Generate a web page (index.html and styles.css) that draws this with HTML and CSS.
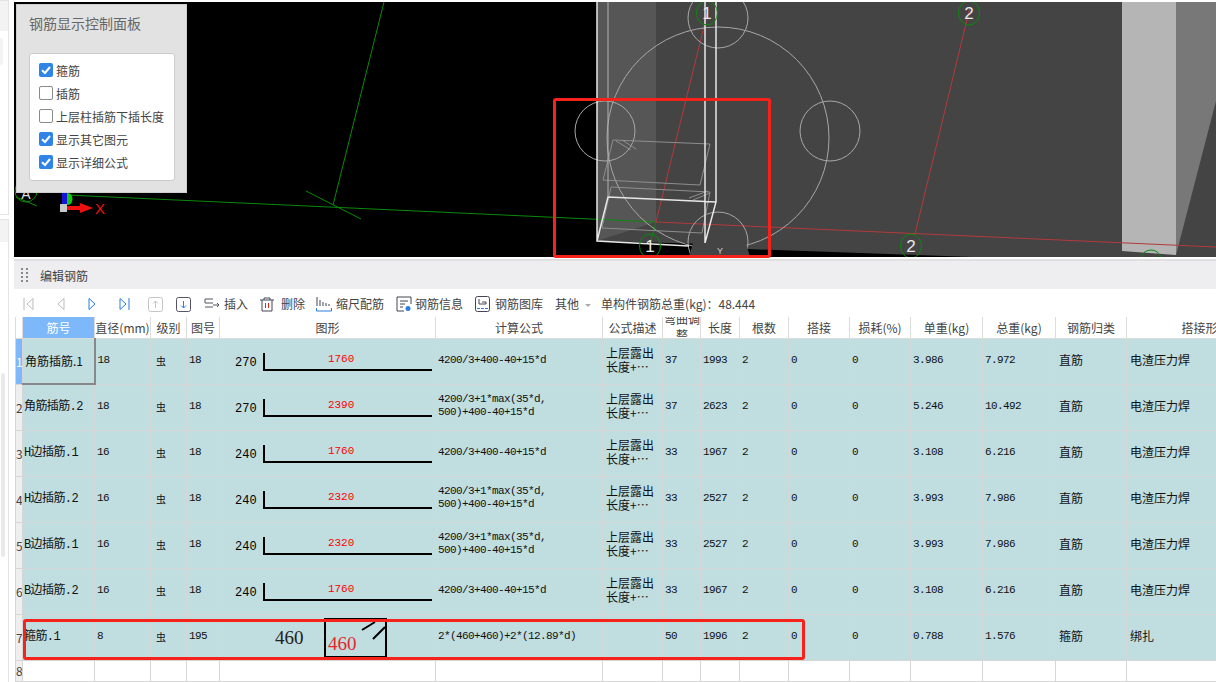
FILE: index.html
```html
<!DOCTYPE html>
<html lang="zh">
<head>
<meta charset="utf-8">
<title>编辑钢筋</title>
<link rel="stylesheet" href="styles.css">
</head>
<body>
<div class="app">
  <aside class="side">
    <div class="side-card"><div class="side-head"></div><div class="side-body"></div></div>
    <div class="side-card side-low"><div class="side-head"></div><div class="side-track"></div></div>
  </aside>
  <main class="main">
    <section class="view">
      <svg class="scene" viewBox="14 2 1202 255" width="1202" height="255">
        <rect x="14" y="2" width="1202" height="255" fill="#000"/>
        <polygon points="597,2 1216,2 1216,257 973,257 746,249 705,244 597,241" fill="#444"/>
        <polygon points="597,2 656,2 656,222 597,241" fill="#565656"/>
        <polygon points="1122,2 1176,2 1176,255 1122,251" fill="#b5b5b5"/>
        <polygon points="1176,2 1216,2 1216,101 1176,255" fill="#787878"/>
        <path d="M67 195L656 222M384 2L333 205M306 191L361 219M656 222L650 244" stroke="#0a8a0a" fill="none"/>
        <path d="M708 10L656 222M970 7L915 234M656 222L1216 247" stroke="#b33a3a" fill="none"/>
        <g fill="none" stroke="#a8a8a8">
          <circle cx="718" cy="138" r="111"/>
          <circle cx="718" cy="18" r="30"/>
          <circle cx="605" cy="131" r="30"/>
          <circle cx="830" cy="131" r="30"/>
          <circle cx="718" cy="242" r="30"/>
        </g>
        <g fill="none" stroke="#8e8e8e">
          <path d="M613 140L710 144L700 185L603 180Z"/>
          <path d="M611 187L710 192L702 233L602 228Z"/>
          <path d="M616 141L631 150M622 140L636 149M689 198L708 191M693 200L710 193"/>
        </g>
        <g fill="none" stroke="#e8e8e8">
          <path d="M597 2V241L689 246M705 2V243M716 2V202L705 243M597 241L608 197L716 202" stroke-width="1.5"/>
          <path d="M608 2V197" stroke="#b0b0b0"/>
        </g>
        <polygon points="689,257 693,243 746,243 750,257" fill="#444"/>
        <text class="y-label" x="720" y="254">Y</text>
        <g fill="none" stroke="#0a8a0a">
          <ellipse cx="707" cy="13" rx="10.5" ry="12"/>
          <ellipse cx="969" cy="13" rx="10.5" ry="12"/>
          <ellipse cx="650" cy="246" rx="10.5" ry="12"/>
          <ellipse cx="911" cy="246" rx="10.5" ry="12"/>
          <ellipse cx="1151" cy="259" rx="10" ry="9"/>
          <ellipse cx="26" cy="191" rx="11" ry="11"/>
          <path d="M16 197L37 206"/>
        </g>
        <text class="axis-a" x="26" y="199">A</text>
        <text class="axis-no" x="707" y="19">1</text>
        <text class="axis-no" x="969" y="19">2</text>
        <text class="axis-no" x="650" y="252">1</text>
        <text class="axis-no" x="911" y="252">2</text>
        <ellipse cx="68" cy="199" rx="4.5" ry="6" fill="#12c612"/>
        <rect x="62" y="193" width="5" height="11" fill="#1414d8"/>
        <rect x="60" y="204" width="7" height="8" fill="#c8c8c8"/>
        <path d="M67 206H80V203L93 208L80 213V210H67Z" fill="#f01010"/>
        <text class="x-label" x="95" y="214">X</text>
      </svg>
      <div class="panel">
        <h2 class="panel-title">钢筋显示控制面板</h2>
        <div class="panel-box">
          <label class="opt"><span class="box on"><svg viewBox="0 0 14 14" width="14" height="14"><path d="M3 7.2L6 10L11 4" fill="none" stroke="#fff" stroke-width="2"/></svg></span>箍筋</label>
          <label class="opt"><span class="box"></span>插筋</label>
          <label class="opt"><span class="box"></span>上层柱插筋下插长度</label>
          <label class="opt"><span class="box on"><svg viewBox="0 0 14 14" width="14" height="14"><path d="M3 7.2L6 10L11 4" fill="none" stroke="#fff" stroke-width="2"/></svg></span>显示其它图元</label>
          <label class="opt"><span class="box on"><svg viewBox="0 0 14 14" width="14" height="14"><path d="M3 7.2L6 10L11 4" fill="none" stroke="#fff" stroke-width="2"/></svg></span>显示详细公式</label>
        </div>
      </div>
      <div class="mark mark-view"></div>
    </section>

    <section class="editor">
      <header class="titlebar">
        <svg class="grip" viewBox="0 0 7 14" width="7" height="14"><path d="M0 0h2v2H0zM5 0h2v2H5zM0 4h2v2H0zM5 4h2v2H5zM0 8h2v2H0zM5 8h2v2H5zM0 12h2v2H0zM5 12h2v2H5z" fill="#888"/></svg>
        <span>编辑钢筋</span>
      </header>
      <div class="toolbar">
        <svg class="i first" viewBox="0 0 11 14" width="11" height="14"><path d="M1 1V13M10 1.5L4 7L10 12.5Z" fill="none" stroke="#bbb"/></svg>
        <svg class="i second" viewBox="0 0 8 14" width="8" height="14"><path d="M7 1.5L1 7L7 12.5Z" fill="none" stroke="#bbb"/></svg>
        <svg class="i third" viewBox="0 0 8 14" width="8" height="14"><path d="M1 1.5L7 7L1 12.5Z" fill="none" stroke="#2a7de1"/></svg>
        <svg class="i fourth" viewBox="0 0 11 14" width="11" height="14"><path d="M10 1V13M1 1.5L7 7L1 12.5Z" fill="none" stroke="#2a7de1"/></svg>
        <svg class="i up" viewBox="0 0 15 15" width="15" height="15"><rect x=".5" y=".5" width="14" height="14" rx="2" fill="none" stroke="#c4c4c4"/><path d="M7.5 11V4M5 6.5L7.5 4L10 6.5" fill="none" stroke="#c4c4c4"/></svg>
        <svg class="i down" viewBox="0 0 15 15" width="15" height="15"><rect x=".5" y=".5" width="14" height="14" rx="2" fill="none" stroke="#556"/><path d="M7.5 4V11M5 8.5L7.5 11L10 8.5" fill="none" stroke="#2a7de1"/></svg>
        <svg class="i ins" viewBox="0 0 16 14" width="16" height="14"><path d="M9 2H1V6H9M1 10H9M9 8H15M13 6L15 8L13 10" fill="none" stroke="#556"/></svg>
        <span class="tool t-ins">插入</span>
        <svg class="i del" viewBox="0 0 14 15" width="14" height="15"><path d="M0 3H14M4 3V1H10V3M2 3V14H12V3" fill="none" stroke="#445"/><path d="M5.5 6V11M8.5 6V11" stroke="#d22"/></svg>
        <span class="tool t-del">删除</span>
        <svg class="i scale" viewBox="0 0 16 16" width="16" height="16"><path d="M1 1V10M4 4V10M7 6V10M10 7V10M13 8V10" stroke="#445" fill="none"/><path d="M.5 12V15H15.5V12" stroke="#2a7de1" fill="none"/></svg>
        <span class="tool t-scale">缩尺配筋</span>
        <svg class="i info" viewBox="0 0 16 16" width="16" height="16"><path d="M15 8V1H1V15H8" fill="none" stroke="#445"/><path d="M4 5H12M4 8H9M4 11H7" stroke="#445"/><circle cx="12" cy="12.500" r="2.500" fill="#2a7de1"/></svg>
        <span class="tool t-info">钢筋信息</span>
        <svg class="i lib" viewBox="0 0 15 16" width="15" height="16"><rect x=".5" y=".5" width="14" height="15" rx="2" fill="none" stroke="#445"/><path d="M4 3V8H11V6H7" fill="none" stroke="#445"/><path d="M2 12.500H13" stroke="#2a7de1" stroke-dasharray="3 1"/></svg>
        <span class="tool t-lib">钢筋图库</span>
        <span class="tool t-other">其他</span>
        <span class="caret"></span>
        <span class="tool t-total">单构件钢筋总重(kg)：48.444</span>
      </div>
      <table class="grid">
        <colgroup>
          <col class="c0"><col class="c1"><col class="c2"><col class="c3"><col class="c4"><col class="c5"><col class="c6"><col class="c7"><col class="c8"><col class="c9"><col class="c10"><col class="c11"><col class="c12"><col class="c13"><col class="c14"><col class="c15"><col class="c16">
        </colgroup>
        <thead>
          <tr>
            <th></th><th class="active">筋号</th><th>直径(mm)</th><th>级别</th><th>图号</th><th>图形</th><th>计算公式</th><th>公式描述</th><th><div class="wrap-head">弯曲调整</div></th><th>长度</th><th>根数</th><th>搭接</th><th>损耗(%)</th><th>单重(kg)</th><th>总重(kg)</th><th>钢筋归类</th><th>搭接形式</th>
          </tr>
        </thead>
        <tbody>
          <tr>
            <th class="rn rn-on">1</th><td class="sel name-sans">角筋插筋.1</td><td>18</td><td class="lv">虫</td><td>18</td>
            <td><div class="shape"><span class="lead">270</span><div class="leg">1760</div></div></td>
            <td>4200/3+400-40+15*d</td><td class="cjk">上层露出长度+…</td><td>37</td><td>1993</td><td>2</td><td>0</td><td>0</td><td>3.986</td><td>7.972</td><td class="cjk">直筋</td><td class="cjk">电渣压力焊</td>
          </tr>
          <tr>
            <th class="rn">2</th><td class="name">角筋插筋.2</td><td>18</td><td class="lv">虫</td><td>18</td>
            <td><div class="shape"><span class="lead">270</span><div class="leg">2390</div></div></td>
            <td>4200/3+1*max(35*d,<br>500)+400-40+15*d</td><td class="cjk">上层露出长度+…</td><td>37</td><td>2623</td><td>2</td><td>0</td><td>0</td><td>5.246</td><td>10.492</td><td class="cjk">直筋</td><td class="cjk">电渣压力焊</td>
          </tr>
          <tr>
            <th class="rn">3</th><td class="name">H边插筋.1</td><td>16</td><td class="lv">虫</td><td>18</td>
            <td><div class="shape"><span class="lead">240</span><div class="leg">1760</div></div></td>
            <td>4200/3+400-40+15*d</td><td class="cjk">上层露出长度+…</td><td>33</td><td>1967</td><td>2</td><td>0</td><td>0</td><td>3.108</td><td>6.216</td><td class="cjk">直筋</td><td class="cjk">电渣压力焊</td>
          </tr>
          <tr>
            <th class="rn">4</th><td class="name">H边插筋.2</td><td>16</td><td class="lv">虫</td><td>18</td>
            <td><div class="shape"><span class="lead">240</span><div class="leg">2320</div></div></td>
            <td>4200/3+1*max(35*d,<br>500)+400-40+15*d</td><td class="cjk">上层露出长度+…</td><td>33</td><td>2527</td><td>2</td><td>0</td><td>0</td><td>3.993</td><td>7.986</td><td class="cjk">直筋</td><td class="cjk">电渣压力焊</td>
          </tr>
          <tr>
            <th class="rn">5</th><td class="name">B边插筋.1</td><td>16</td><td class="lv">虫</td><td>18</td>
            <td><div class="shape"><span class="lead">240</span><div class="leg">2320</div></div></td>
            <td>4200/3+1*max(35*d,<br>500)+400-40+15*d</td><td class="cjk">上层露出长度+…</td><td>33</td><td>2527</td><td>2</td><td>0</td><td>0</td><td>3.993</td><td>7.986</td><td class="cjk">直筋</td><td class="cjk">电渣压力焊</td>
          </tr>
          <tr>
            <th class="rn">6</th><td class="name">B边插筋.2</td><td>16</td><td class="lv">虫</td><td>18</td>
            <td><div class="shape"><span class="lead">240</span><div class="leg">1760</div></div></td>
            <td>4200/3+400-40+15*d</td><td class="cjk">上层露出长度+…</td><td>33</td><td>1967</td><td>2</td><td>0</td><td>0</td><td>3.108</td><td>6.216</td><td class="cjk">直筋</td><td class="cjk">电渣压力焊</td>
          </tr>
          <tr>
            <th class="rn">7</th><td class="name">箍筋.1</td><td>8</td><td class="lv">虫</td><td>195</td>
            <td class="draw"><div class="stirrup"><span class="stirrup-lead">460</span><div class="stirrup-box"><span>460</span><svg class="hook" viewBox="0 0 26 20" width="26" height="20"><path d="M3 10L16 2M14 19L26 7" stroke="#000" stroke-width="2" fill="none"/></svg></div></div></td>
            <td>2*(460+460)+2*(12.89*d)</td><td></td><td>50</td><td>1996</td><td>2</td><td>0</td><td>0</td><td>0.788</td><td>1.576</td><td class="cjk">箍筋</td><td class="cjk">绑扎</td>
          </tr>
          <tr class="blank">
            <th class="rn">8</th><td></td><td></td><td></td><td></td><td></td><td></td><td></td><td></td><td></td><td></td><td></td><td></td><td></td><td></td><td></td><td></td>
          </tr>
        </tbody>
      </table>
      <div class="mark mark-row"></div>
    </section>
  </main>
</div>
</body>
</html>
```
FILE: styles.css
```css
* { box-sizing: border-box; }
html, body { margin: 0; height: 100%; overflow: hidden; background: #fff; }
body { font-family: "Noto Sans CJK SC", "Liberation Sans", sans-serif; }
.app { display: flex; width: 1216px; height: 682px; }

.side { width: 14px; flex: none; display: flex; flex-direction: column; padding-right: 5px; }
.side-card { border: 1px solid #e4e4e4; border-left: 0; background: #fff; height: 215px; flex: none; }
.side-head { height: 30px; background: #f3f3f3; }
.side-body { width: 3px; height: 27px; margin-top: 7px; background: #f3f3f3; border-radius: 0 3px 3px 0; }
.side-low { flex: 1; height: auto; margin-top: 4px; border-bottom: 0; }
.side-low .side-head { height: 22px; }
.side-track { width: 4px; height: 184px; margin: 131px 0 0 1px; background: #eaeaea; border-radius: 2px; }

.main { width: 1202px; flex: none; overflow: hidden; }
.view { position: relative; height: 255px; margin-top: 2px; }
.scene { display: block; }
.y-label { font: 9px "Liberation Sans", sans-serif; fill: #ccc; text-anchor: middle; }
.axis-no { font: 17px "Liberation Sans", sans-serif; fill: #e8e8e8; text-anchor: middle; }
.axis-a { font: 14px "Liberation Sans", sans-serif; fill: #ddd; text-anchor: middle; }
.x-label { font: 15px "Liberation Sans", sans-serif; fill: #f01010; }

.panel { position: absolute; left: 2px; top: 2px; width: 171px; height: 189px; padding: 8px 12px; background: #e2e2e2; border: 1px solid #cfcfcf; }
.panel-title { margin: 0 0 20px; font-size: 14px; line-height: 20px; font-weight: 400; color: #666; }
.panel-box { display: flex; flex-direction: column; gap: 5px; width: 146px; height: 128px; padding: 7px 9px; background: #fff; border: 1px solid #ccc; border-radius: 3px; }
.opt { display: flex; align-items: center; gap: 3px; height: 18px; flex: none; font-size: 12px; color: #444; white-space: nowrap; }
.box { width: 14px; height: 14px; flex: none; border: 1px solid #8a8a8a; border-radius: 2px; background: #fff; }
.box.on { border: 0; background: #2f84e6; }
.box svg { display: block; }

.editor { position: relative; margin-top: 2px; border-top: 2px solid #e0e0e0; }
.titlebar { display: flex; align-items: center; gap: 12px; height: 28px; padding-left: 7px; background: #eeeef0; font-size: 12px; color: #444; }
.toolbar { display: flex; align-items: center; height: 28px; padding-top: 2px; font-size: 12px; color: #444; white-space: nowrap; }
.i { flex: none; display: block; }
.tool { line-height: 16px; flex: none; }
.first { margin-left: 9px; }
.second { margin-left: 23px; }
.third { margin-left: 23px; }
.fourth { margin-left: 23px; }
.up { margin-left: 18px; }
.down { margin-left: 13px; }
.ins { margin-left: 13px; }
.t-ins { margin-left: 4px; }
.del { margin-left: 12px; }
.t-del { margin-left: 7px; }
.scale { margin-left: 11px; }
.t-scale { margin-left: 4px; }
.info { margin-left: 12px; }
.t-info { margin-left: 3px; }
.lib { margin-left: 12px; }
.t-lib { margin-left: 5px; }
.t-other { margin-left: 12px; }
.caret { width: 0; height: 0; margin: 2px 0 0 6px; border: 3px solid transparent; border-top: 3px solid #aaa; border-bottom: 0; }
.t-total { margin-left: 10px; letter-spacing: 0; }

.grid { border-collapse: collapse; table-layout: fixed; width: 1269px; margin-left: 1px; font: 11px "Liberation Mono", monospace; letter-spacing: -.6px; color: #111; }
.c0 { width: 7px; } .c1 { width: 72px; } .c2 { width: 56px; } .c3 { width: 36px; }
.c4 { width: 33px; } .c5 { width: 216px; } .c6 { width: 167px; } .c7 { width: 60px; }
.c8 { width: 38px; } .c9 { width: 39px; } .c10 { width: 49px; } .c11 { width: 61px; }
.c12 { width: 61px; } .c13 { width: 72px; } .c14 { width: 73px; } .c15 { width: 71px; } .c16 { width: 158px; }
.grid thead th { height: 21px; padding: 0; background: #fff; border: 1px solid #dcdcdc; border-top: 0; font: 12px "Noto Sans CJK SC", "Liberation Sans", sans-serif; letter-spacing: 0; color: #444; white-space: nowrap; overflow: hidden; }
.grid thead th.active { background: #7db8fb; color: #fff; }
.wrap-head { height: 20px; width: 38px; display: flex; align-items: center; justify-content: center; white-space: normal; line-height: 16px; overflow: hidden; }
.grid tbody td { height: 46px; padding: 0 3px 2px 2px; background: #c0dde0; border: 1px solid #d6d6d6; overflow: hidden; white-space: nowrap; line-height: 13px; }
.grid tbody td.draw { padding: 0; }
.grid tbody .rn { padding: 0; background: #eeeeee; border: 1px solid #d6d6d6; font: 12px "Noto Sans CJK SC", "Liberation Sans", sans-serif; letter-spacing: 0; color: #444; overflow: hidden; }
.grid tbody .rn-on { background: #7db8fb; color: #fff; }
.grid tbody td.sel { border-right: 2px solid #888; border-bottom: 2px solid #888; padding: 0 2px; }
.grid tbody td.name-sans { font: 12px "Noto Sans CJK SC", "Liberation Sans", sans-serif; letter-spacing: 0; color: #111; }
.grid tbody td.name { font-family: "Liberation Mono", "Noto Sans CJK SC", monospace; font-size: 12px; letter-spacing: -.6px; padding: 0 1px; }
.grid tbody td.cjk { font: 12px/14px "Noto Sans CJK SC", "Liberation Sans", sans-serif; letter-spacing: 0; white-space: normal; color: #111; padding-left: 3px; }
.grid tbody td.lv { font: 10px "Noto Sans CJK SC", sans-serif; letter-spacing: 0; padding-left: 5px; }
.grid tbody .blank td { height: 21px; background: #fff; }
.grid tbody .blank .rn { height: 21px; }

.shape { display: flex; align-items: flex-end; margin-top: 4px; padding-left: 13px; height: 18px; letter-spacing: 0; }
.lead { font-size: 12px; line-height: 14px; color: #000; margin-bottom: 1px; }
.leg { width: 169px; height: 18px; margin-left: 6px; padding-right: 14px; border-left: 2px solid #000; border-bottom: 2px solid #000; color: #f00; font-size: 11px; line-height: 12px; text-align: center; }

.stirrup { display: flex; align-items: center; height: 40px; margin-top: 1px; padding-left: 55px; font-family: "Liberation Serif", serif; font-size: 19px; letter-spacing: 0; }
.stirrup-lead { color: #222; width: 49px; }
.stirrup-box { position: relative; width: 63px; height: 40px; border: 2px solid #000; color: #e8262a; padding: 13px 0 0 2px; line-height: 22px; }
.hook { position: absolute; right: 0; top: 0; }

.mark { position: absolute; border: 3px solid #f5231b; border-radius: 3px; pointer-events: none; }
.mark-view { left: 539px; top: 96px; width: 218px; height: 160px; }
.mark-row { left: 9px; top: 358px; width: 782px; height: 41px; }
```
